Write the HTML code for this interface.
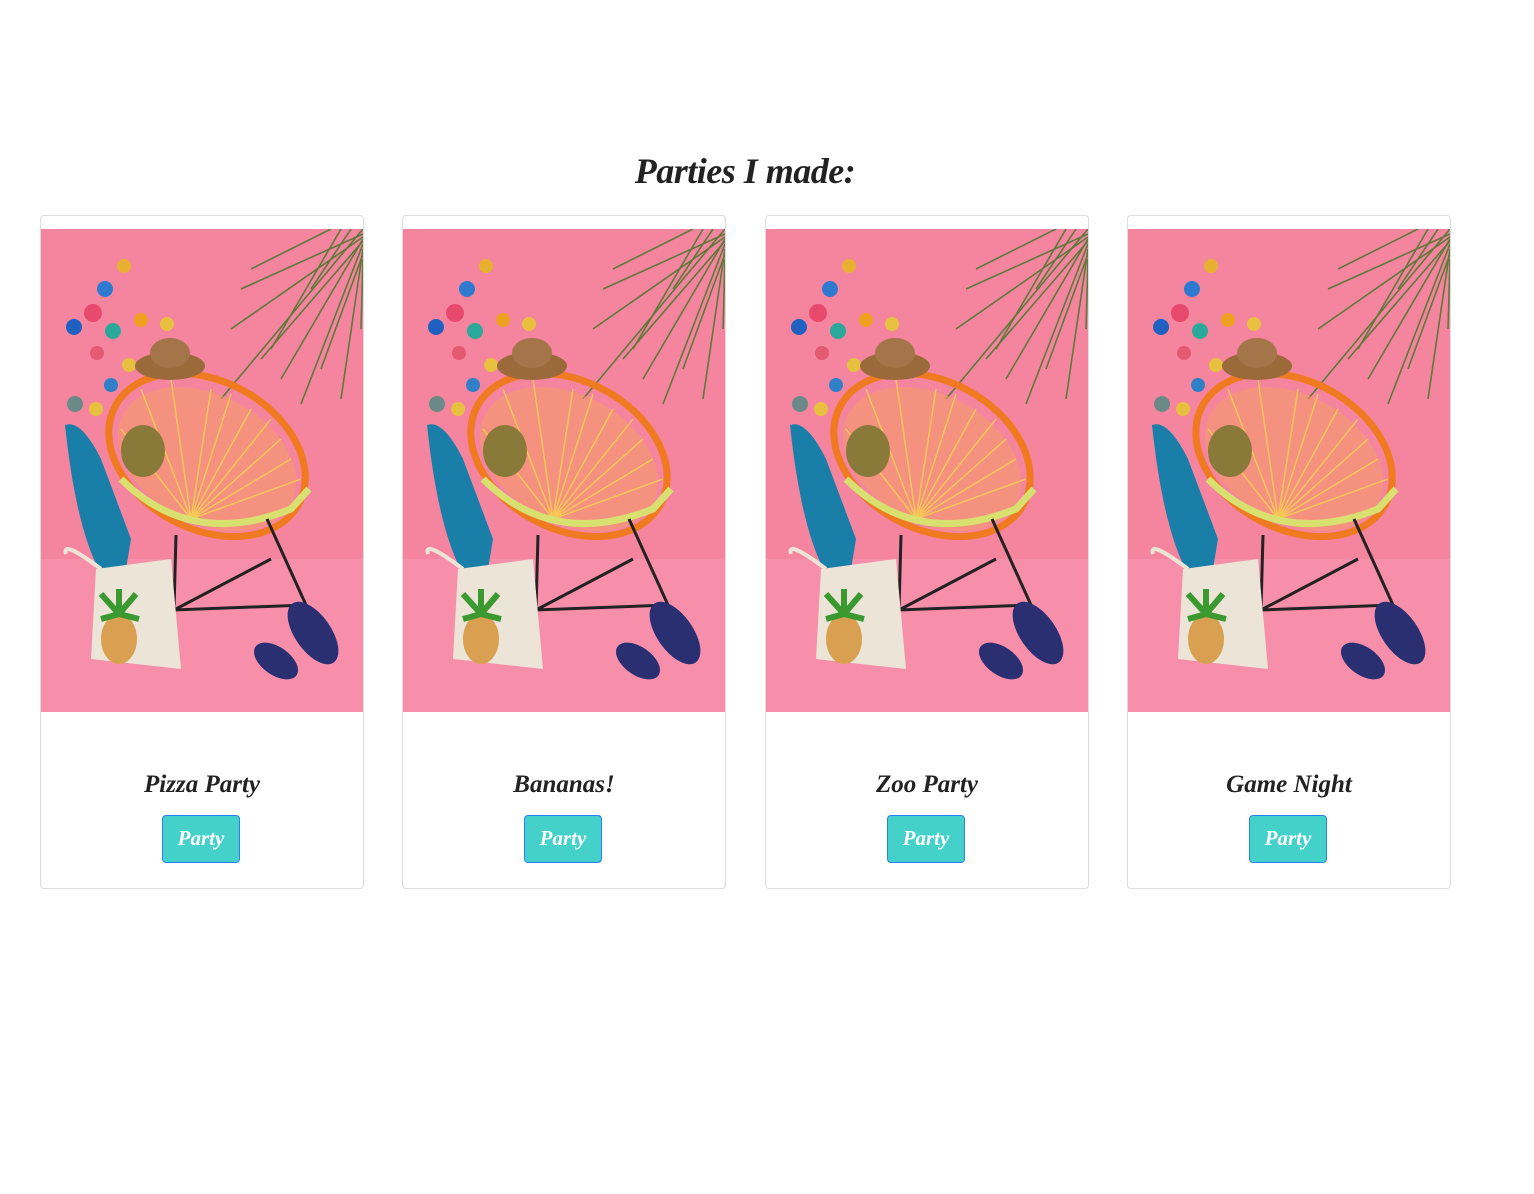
<!DOCTYPE html>
<html><head><meta charset="utf-8"><style>
body{margin:0;background:#fff;font-family:"Liberation Serif",serif;}
h1{position:absolute;top:150px;left:0;width:1490px;text-align:center;margin:0;font-size:36px;font-style:italic;font-weight:bold;color:#222;letter-spacing:-0.5px}
.card{position:absolute;top:215px;width:322px;height:672px;border:1px solid #ddd;border-radius:4px;background:#fff}
.card svg{position:absolute;left:0;top:13px;display:block}
.t{position:absolute;top:555px;width:100%;text-align:center;font-size:25px;font-style:italic;font-weight:bold;color:#222}
.b{position:absolute;top:599px;left:121px;width:78px;height:48px;box-sizing:border-box;background:#44d1ca;border:1.5px solid #2a7fff;border-radius:4px;color:#fff;font-size:21px;font-style:italic;font-weight:bold;text-align:center;line-height:45px}
</style></head><body>
<svg width="0" height="0" style="position:absolute"><symbol id="img" viewBox="0 0 322 483">
<rect width="322" height="483" fill="#f5849f"/>
<rect y="330" width="322" height="153" fill="#f78fab"/>
<g stroke="#5d7a3a" stroke-width="1.6" fill="none">
<path d="M322 0 L180 170"/><path d="M300 0 L230 120"/><path d="M322 10 L240 150"/><path d="M322 20 L300 170"/><path d="M322 5 L200 60"/><path d="M322 8 L190 100"/><path d="M322 15 L260 175"/><path d="M322 25 L280 140"/><path d="M290 0 L210 40"/><path d="M322 30 L320 100"/><path d="M310 0 L270 60"/><path d="M322 12 L220 130"/></g>
<g>
<circle cx="83" cy="37" r="7" fill="#e8b030"/><circle cx="64" cy="60" r="8" fill="#2f7ad0"/><circle cx="52" cy="84" r="9" fill="#e84a6e"/><circle cx="33" cy="98" r="8" fill="#2060c0"/><circle cx="72" cy="102" r="8" fill="#2aa89a"/><circle cx="100" cy="91" r="7" fill="#f0a020"/><circle cx="126" cy="95" r="7" fill="#e8c040"/><circle cx="56" cy="124" r="7" fill="#e45a70"/><circle cx="88" cy="136" r="7" fill="#e8c040"/><circle cx="70" cy="156" r="7" fill="#3080c8"/><circle cx="34" cy="175" r="8" fill="#6a8a88"/><circle cx="55" cy="180" r="7" fill="#e8c040"/></g>
<path d="M24 196 Q40 190 60 230 L90 310 L85 340 L60 345 Q35 300 24 196Z" fill="#1a7fa8"/>
<ellipse cx="166" cy="230" rx="95" ry="64" transform="rotate(28 166 230)" fill="#f6a060" opacity="0.5"/>
<g stroke="#f8d050" stroke-width="1.4" opacity="0.9"><path d="M150 290 L100 160"/><path d="M150 290 L130 150"/><path d="M150 290 L170 160"/><path d="M150 290 L210 180"/><path d="M150 290 L240 210"/><path d="M150 290 L260 250"/><path d="M150 290 L80 200"/><path d="M150 290 L230 190"/><path d="M150 290 L190 165"/><path d="M150 290 L250 230"/></g>
<ellipse cx="166" cy="226" rx="104" ry="74" transform="rotate(28 166 226)" fill="none" stroke="#f07a20" stroke-width="7"/>
<path d="M80 250 Q150 320 250 280 L268 260" stroke="#d8e070" stroke-width="7" fill="none"/>
<path d="M135 306 L133 381 L265 376 L226 290 M133 381 L230 330" stroke="#222" stroke-width="3" fill="none"/>
<ellipse cx="102" cy="222" rx="22" ry="26" fill="#8a7a3a"/>
<ellipse cx="129" cy="137" rx="35" ry="14" fill="#9a6a3a"/><ellipse cx="129" cy="124" rx="20" ry="15" fill="#a5754a"/>
<path d="M55 340 L130 330 L140 440 L50 430 Z" fill="#ece4d6"/>
<path d="M25 325 Q20 310 60 340" stroke="#ece4d6" stroke-width="4" fill="none"/>
<ellipse cx="78" cy="410" rx="18" ry="25" fill="#d8a050"/>
<path d="M78 385 L60 365 M78 385 L95 365 M78 385 L78 360 M78 385 L60 390 M78 385 L98 390" stroke="#3a9a30" stroke-width="6"/>
<ellipse cx="272" cy="404" rx="18" ry="36" transform="rotate(-35 272 404)" fill="#2a2f72"/>
<ellipse cx="235" cy="432" rx="14" ry="25" transform="rotate(-55 235 432)" fill="#2a2f72"/>
</symbol></svg>
<h1>Parties I made:</h1>
<div class="card" style="left:40px"><svg width="322" height="483"><use href="#img"/></svg><div class="t">Pizza Party</div><div class="b">Party</div></div>
<div class="card" style="left:402px"><svg width="322" height="483"><use href="#img"/></svg><div class="t">Bananas!</div><div class="b">Party</div></div>
<div class="card" style="left:765px"><svg width="322" height="483"><use href="#img"/></svg><div class="t">Zoo Party</div><div class="b">Party</div></div>
<div class="card" style="left:1127px"><svg width="322" height="483"><use href="#img"/></svg><div class="t">Game Night</div><div class="b">Party</div></div>
</body></html>
